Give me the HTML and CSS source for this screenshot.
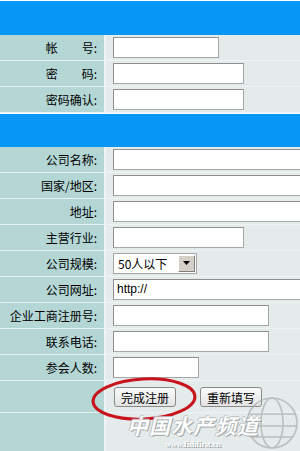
FILE: index.html
```html
<!DOCTYPE html>
<html lang="zh-CN">

<head>
    <meta charset="UTF-8">
    <title>注册</title>
    <link rel="stylesheet" href="styles.css">
</head>

<body>
    <div class="form">
        <div class="band"></div>

        <div class="row">
            <div class="label">帐　　号:</div>
            <div class="field"><input type="text" class="w106"></div>
        </div>
        <div class="row">
            <div class="label">密　　码:</div>
            <div class="field"><input type="password" class="w131"></div>
        </div>
        <div class="row">
            <div class="label">密码确认:</div>
            <div class="field"><input type="password" class="w131"></div>
        </div>

        <div class="band band-2"></div>

        <div class="row">
            <div class="label">公司名称:</div>
            <div class="field"><input type="text" class="wide"></div>
        </div>
        <div class="row">
            <div class="label">国家/地区:</div>
            <div class="field"><input type="text" class="wide"></div>
        </div>
        <div class="row">
            <div class="label">地址:</div>
            <div class="field"><input type="text" class="wide"></div>
        </div>
        <div class="row">
            <div class="label">主营行业:</div>
            <div class="field"><input type="text" class="w131"></div>
        </div>
        <div class="row">
            <div class="label">公司规模:</div>
            <div class="field">
                <div class="select">
                    <span class="select-text">50人以下</span>
                    <span class="select-btn">
                        <svg width="7" height="4" viewBox="0 0 7 4"><path d="M0 0h7L3.5 4z" fill="#000"/></svg>
                    </span>
                </div>
            </div>
        </div>
        <div class="row">
            <div class="label">公司网址:</div>
            <div class="field"><input type="text" class="wide" value="http://"></div>
        </div>
        <div class="row">
            <div class="label">企业工商注册号:</div>
            <div class="field"><input type="text" class="w156"></div>
        </div>
        <div class="row">
            <div class="label">联系电话:</div>
            <div class="field"><input type="text" class="w156"></div>
        </div>
        <div class="row">
            <div class="label">参会人数:</div>
            <div class="field"><input type="text" class="w86"></div>
        </div>

        <div class="row row-btn">
            <div class="label"></div>
            <div class="field">
                <button type="button" class="btn">完成注册</button>
                <button type="button" class="btn btn-reset">重新填写</button>
            </div>
        </div>
        <div class="row row-tail">
            <div class="label"></div>
            <div class="field"></div>
        </div>
    </div>

    <!-- 红圈标记 -->
    <svg class="mark" width="112" height="50" viewBox="0 0 112 50">
        <ellipse cx="55" cy="24" rx="51" ry="20" fill="none" stroke="#c8121c" stroke-width="3" transform="rotate(-3 55 24)"/>
    </svg>

    <!-- 水印 -->
    <svg class="globe" width="56" height="58" viewBox="0 0 56 58">
        <g fill="none" stroke="#a9adad" stroke-width="1.6" opacity="0.7">
            <circle cx="28" cy="29" r="25"/>
            <ellipse cx="28" cy="29" rx="11" ry="25"/>
            <path d="M5 20h46M3 32h50M7 43h42"/>
        </g>
    </svg>
    <div class="watermark">
        <div class="wm-title">中国水产频道</div>
        <div class="wm-url">www.fishfirst.cn</div>
    </div>
</body>

</html>
```

FILE: styles.css
```css
body {
    margin: 0;
    background: #fff;
    overflow: hidden;
    font-family: "Noto Sans CJK SC", "Liberation Sans", sans-serif;
    font-size: 12px;
    color: #000;
}

.form {
    width: 300px;
    padding-top: 1px;
}

/* 蓝色分隔条 */
.band {
    height: 34px;
    background: #0797f6;
}

.band-2 {
    height: 33px;
    margin-top: 1px;
}

.row {
    display: flex;
    height: 26px;
}

.row .label {
    width: 106px;
    flex: none;
    box-sizing: border-box;
    padding-right: 7px;
    text-align: right;
    line-height: 25px;
    background: #b4d7d6;
    border-bottom: 1px solid #e6f1f1;
    border-right: 2px solid #eef4f4;
    white-space: nowrap;
}

.row .field {
    flex: 1;
    display: flex;
    align-items: center;
    padding-left: 7px;
    background: #e5ebeb;
    border-bottom: 1px solid #eef3f3;
    overflow: hidden;
}

.field input {
    box-sizing: border-box;
    height: 21px;
    margin: 0 0 1px;
    padding: 0 3px;
    border: 1px solid #a7a7a7;
    border-top-color: #8f8f8f;
    border-left-color: #8f8f8f;
    background: #fff;
    font-family: "Liberation Sans", sans-serif;
    font-size: 12px;
    flex: none;
}

.w86 { width: 86px; }
.w106 { width: 106px; }
.w131 { width: 131px; }
.w156 { width: 156px; }
.wide { width: 240px; }

/* 下拉框 */
.select {
    display: flex;
    align-items: center;
    box-sizing: border-box;
    width: 84px;
    height: 21px;
    margin-bottom: 1px;
    padding: 0 1px 0 4px;
    border: 1px solid #a7a7a7;
    background: #fff;
    font-size: 12px;
}

.select-text {
    flex: 1;
}

.select-btn {
    display: flex;
    align-items: center;
    justify-content: center;
    width: 15px;
    height: 15px;
    background: #d4d0c8;
    border: 1px solid #fff;
    border-right-color: #808080;
    border-bottom-color: #808080;
}

.row-btn {
    height: 32px;
}

.row-btn .label {
    line-height: 31px;
}

.row-btn .field {
    gap: 24px;
    padding-left: 8px;
    padding-top: 1px;
}

.btn {
    box-sizing: border-box;
    width: 62px;
    height: 20px;
    padding: 0;
    border: 1px solid #8a8a8a;
    border-radius: 3px;
    background: linear-gradient(#fbfbfb, #e3e3e3);
    font-family: "Noto Sans CJK SC", sans-serif;
    font-size: 12px;
    line-height: 17px;
    color: #000;
}

.row-tail {
    height: 40px;
}

.row-tail .label,
.row-tail .field {
    border-bottom: none;
}

.mark {
    position: absolute;
    left: 89px;
    top: 375px;
}

.globe {
    position: absolute;
    left: 244px;
    top: 394px;
}

.watermark {
    position: absolute;
    left: 118px;
    top: 413px;
    width: 150px;
    text-align: center;
    color: #fff;
}

.wm-title {
    font-size: 21px;
    font-weight: bold;
    font-style: italic;
    line-height: 24px;
    letter-spacing: 1px;
    text-shadow: 1px 1px 0 #9aa0a0, -1px 0 0 #b8bcbc, 0 -1px 0 #b8bcbc;
    opacity: 0.9;
}

.wm-url {
    margin-top: 3px;
    font-family: "Liberation Serif", serif;
    font-size: 8px;
    font-weight: bold;
    line-height: 9px;
    color: #fff;
    text-shadow: 1px 1px 0 #9aa0a0;
}
```
